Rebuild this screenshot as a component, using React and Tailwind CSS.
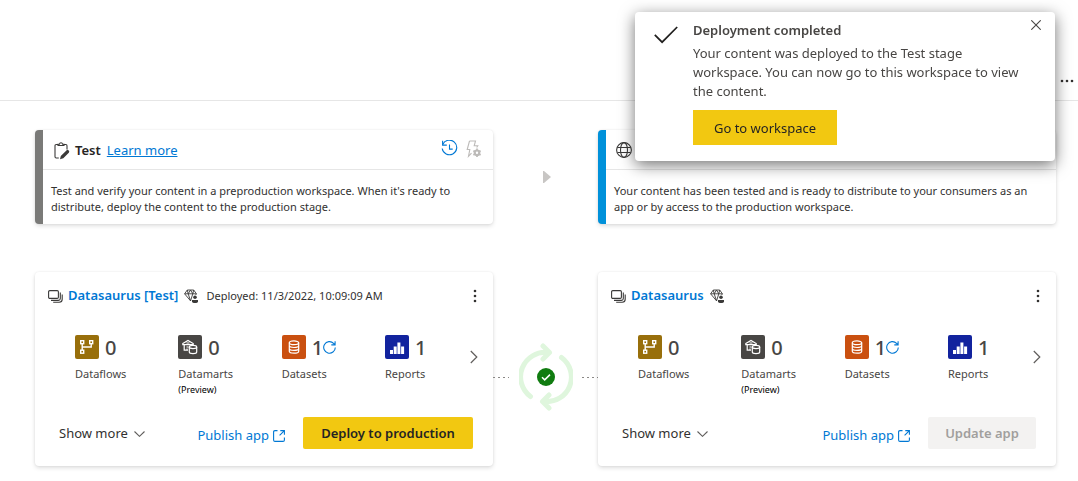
import React from "react";

const stroke = { fill: "none", stroke: "currentColor" };

function ClipboardEditIcon() {
  return (
    <svg width="16" height="18" viewBox="0 0 16 18" className="text-[#3b3a39]" aria-hidden="true">
      <path {...stroke} strokeWidth="1.1" d="M4 2.5H2.2Q1 2.5 1 3.7V14.8Q1 16 2.2 16H4.8M10 2.5h1.8Q13 2.5 13 3.7V7.5" />
      <path {...stroke} strokeWidth="1.1" d="M4 3.5V2.2h1.4Q5.700.8 7 .8T8.600 2.2H10v1.300Z" />
      <path fill="currentColor" d="M12.400 8.500a1.600 1.600 0 0 1 2.400 2.200L9.300 16.300l-3.300 1 .8-3.200Z" />
    </svg>
  );
}

function GlobeIcon() {
  return (
    <svg width="16" height="16" viewBox="0 0 16 16" className="text-[#3b3a39]" aria-hidden="true">
      <g {...stroke} strokeWidth="1.1">
        <circle cx="8" cy="8" r="7.400" />
        <ellipse cx="8" cy="8" rx="3.500" ry="7.400" />
        <path d="M1.400 5.500h13.200M1.400 10.500h13.200" />
      </g>
    </svg>
  );
}

function HistoryIcon() {
  return (
    <svg width="17" height="17" viewBox="0 0 17 17" aria-hidden="true">
      <g {...stroke} strokeWidth="1.100">
        <path d="M1.700 4.600A7.300 7.300 0 1 1 1.200 8.500" />
        <path d="M1.600.8v4.300h4.200M8.500 4.500v4.600h3.200" />
      </g>
    </svg>
  );
}

function RuleSettingsIcon() {
  return (
    <svg width="16" height="18" viewBox="0 0 16 18" aria-hidden="true">
      <path {...stroke} strokeWidth="1.100" d="M3.500 1h6L8.200 5.800h3.600L10.700 7.500M3.500 1 1.200 9.500h2.600L2.500 16.300l3-3.200" />
      <circle {...stroke} cx="11" cy="12.800" r="2.300" strokeWidth="2.200" />
      <path {...stroke} strokeWidth="1.700" d="M11 8.600v2M11 15v2M7.400 10.700l1.700 1M12.900 13.900l1.700 1M7.400 14.900l1.700-1M12.900 11.700l1.700-1" />
    </svg>
  );
}

function WorkspaceIcon() {
  return (
    <svg width="15" height="13" viewBox="0 0 15 13" className="shrink-0 text-[#3b3a39]" aria-hidden="true">
      <g {...stroke} strokeWidth="1.100">
        <rect x=".6" y=".6" width="9.800" height="7.800" rx="1.200" />
        <path d="M3 10.400h7.400q1.900 0 1.900-1.900V2.500M5.200 12.300h6q3 0 3-3V4.500" />
      </g>
    </svg>
  );
}

function PremiumIcon() {
  return (
    <svg width="14" height="14" viewBox="0 0 14 14" className="shrink-0 text-[#3b3a39]" aria-hidden="true">
      <g {...stroke} strokeWidth=".9" strokeLinejoin="round">
        <path d="M6.500 11.800.6 4.800 3.300 1h6.400l2.700 3.800L11.700 6" />
        <path d="M.6 4.800h11.800M3.300 1l.9 3.800 2.300 7M9.700 1l-.9 3.800L6.500 12M4.200 4.800 6.500 1l2.300 3.800" />
      </g>
      <circle cx="11" cy="8.300" r="1.800" fill="currentColor" />
      <path fill="currentColor" d="M8 11h6v1.200q0 1.800-1.800 1.800H9.800Q8 14 8 12.200Z" />
    </svg>
  );
}

function DataflowIcon() {
  return (
    <svg width="16" height="16" viewBox="0 0 16 16" aria-hidden="true">
      <g {...stroke} strokeWidth="1.400">
        <rect x="1.700" y="1.700" width="3" height="3" />
        <rect x="10.700" y="1.700" width="3" height="3" />
        <rect x="1.700" y="11.200" width="3" height="3" />
        <path d="M3.200 4.700v6.500M3.200 8h9V4.700" />
      </g>
    </svg>
  );
}

function DatamartIcon() {
  return (
    <svg width="16" height="16" viewBox="0 0 16 16" aria-hidden="true">
      <g {...stroke} strokeWidth="1.200">
        <path d="M.8 4.500 6 1.400l5.200 3.100v1.200H.8ZM2.200 5.700v5.500H6M4.500 8h2M4.500 10h1M4.500 4h3" />
        <ellipse cx="11" cy="8" rx="3.700" ry="1.600" fill="#484644" />
        <path d="M7.300 8v5q0 1.600 3.700 1.600t3.700-1.600V8" />
      </g>
    </svg>
  );
}

function DatasetIcon() {
  return (
    <svg width="16" height="16" viewBox="0 0 16 16" aria-hidden="true">
      <g {...stroke} strokeWidth="1.200">
        <ellipse cx="8" cy="3.800" rx="4.700" ry="1.900" />
        <path d="M3.300 3.800v8.500q0 1.900 4.700 1.900t4.700-1.900V3.800M3.300 6.600q0 1.900 4.700 1.900t4.700-1.900M3.300 9.400q0 1.900 4.700 1.900t4.700-1.900" />
      </g>
    </svg>
  );
}

function ReportIcon() {
  return (
    <svg width="16" height="16" viewBox="0 0 16 16" aria-hidden="true">
      <path fill="currentColor" d="M1 11h3v4H1zM4.700 7.500h3V15h-3zM8.400 3.500h3V15h-3zM12.100 7.500h3V15h-3z" />
    </svg>
  );
}

function RefreshIcon() {
  return (
    <svg width="13" height="13" viewBox="0 0 13 13" aria-hidden="true">
      <path {...stroke} strokeWidth="1.100" d="M12.300 6.500A5.800 5.800 0 1 1 10.600 2.300L12 3.700M12.100.3v3.600H8.300" />
    </svg>
  );
}

function OpenIcon() {
  return (
    <svg width="12" height="12" viewBox="0 0 12 12" aria-hidden="true">
      <path {...stroke} strokeWidth="1.100" d="M4.500.6H2Q.6.600.6 2v8q0 1.400 1.400 1.400h8q1.400 0 1.400-1.400V7.500M7.300.6h4.100v4.100M11.400.6 6.600 5.400" />
    </svg>
  );
}

function ChevronIcon({ down }) {
  return down ? (
    <svg width="11" height="6" viewBox="0 0 11 6" className="text-[#605e5c]" aria-hidden="true">
      <path {...stroke} strokeWidth="1.100" d="m.5.500 5 4.800 5-4.800" />
    </svg>
  ) : (
    <svg width="8" height="14" viewBox="0 0 8 14" className="text-[#605e5c]" aria-hidden="true">
      <path {...stroke} strokeWidth="1.200" d="m.8 1 6 6-6 6" />
    </svg>
  );
}

function SyncStatusIcon() {
  return (
    <svg width="54" height="68" viewBox="0 0 54 68" role="img" aria-label="Stages in sync">
      <g fill="none" stroke="#dff6dd" strokeWidth="5" strokeLinecap="round" strokeLinejoin="round">
        <path d="M11.500 53.500A24.500 24.500 0 0 1 29 9.500M24 3l6.500 6.500-6.500 6.500" />
        <path d="M42.500 14.500A24.500 24.500 0 0 1 25 58.500M30 52l-6.500 6.500 6.500 6.500" />
      </g>
      <circle cx="27" cy="34" r="9" fill="#107c10" />
      <path d="m23 34.300 2.700 2.600 5.300-5.300" fill="none" stroke="#fff" strokeWidth="1.500" />
    </svg>
  );
}

const cardShadow = "rounded bg-white shadow-[0_2px_4px_rgba(0,0,0,0.13),0_0_2px_rgba(0,0,0,0.08)]";

function StageCard({ accent, header, children }) {
  return (
    <section className={`overflow-hidden border-l-8 ${accent} ${cardShadow}`}>
      <div className="flex h-10 items-center border-b border-[#e6e6e6]">{header}</div>
      <p className="pt-[13px] pr-4 pb-[9px] pl-2 text-[11px] leading-4 text-[#323130]">{children}</p>
    </section>
  );
}

function Metric({ color, icon, count, label, note, refresh }) {
  return (
    <div>
      <div className="flex h-6 items-center">
        <span className={`flex size-6 items-center justify-center rounded-xs text-white ${color}`}>{icon}</span>
        <span className="mt-0.5 ml-1.5 text-[20px] leading-6 font-medium text-[#484644]">{count}</span>
        {refresh && (
          <button type="button" aria-label="Refresh datasets" className="text-[#0078d4]">
            <RefreshIcon />
          </button>
        )}
      </div>
      <div className="mt-1.5 text-[11px] leading-[18px] text-[#484644]">{label}</div>
      {note && <div className="text-[9px] leading-[14px] text-black">{note}</div>}
    </div>
  );
}

function WorkspaceCard({ name, deployed, action }) {
  return (
    <section className={`pb-[17px] ${cardShadow}`}>
      <div className="flex h-12 items-center pr-4 pl-[13px]">
        <WorkspaceIcon />
        <a href="#workspace" className="ml-[5px] text-[13px] font-semibold text-[#0078d4]">{name}</a>
        <span className="ml-1.5"><PremiumIcon /></span>
        {deployed && <span className="ml-2 text-[11px] text-[#323130]">{deployed}</span>}
        <button type="button" aria-label={`More options for ${name}`} className="ml-auto text-[#323130]">
          <svg width="4" height="14" viewBox="0 0 4 14" fill="currentColor" aria-hidden="true">
            <circle cx="2" cy="2" r="1.300" /><circle cx="2" cy="7" r="1.300" /><circle cx="2" cy="12" r="1.300" />
          </svg>
        </button>
      </div>
      <div className="mt-[15px] grid grid-cols-[1fr_1fr_1fr_81px_16px] pr-[11px] pl-10">
        <Metric color="bg-[#986f0b]" icon={<DataflowIcon />} count="0" label="Dataflows" />
        <Metric color="bg-[#484644]" icon={<DatamartIcon />} count="0" label="Datamarts" note="(Preview)" />
        <Metric color="bg-[#ca5010]" icon={<DatasetIcon />} count="1" label="Datasets" refresh />
        <Metric color="bg-[#12239e]" icon={<ReportIcon />} count="1" label="Reports" />
        <button type="button" aria-label="Next items" className="mt-3.5 flex h-4 items-center justify-center">
          <ChevronIcon />
        </button>
      </div>
      <div className="mt-5 flex items-center pr-5 pl-6 text-[13px]">
        <button type="button" className="mt-0.5 flex items-center gap-1.5 text-[#323130]">
          Show more <ChevronIcon down />
        </button>
        <a href="#publish" className="mt-1.5 ml-auto flex items-center gap-1 text-[#0078d4]">
          Publish app <OpenIcon />
        </a>
        {action}
      </div>
    </section>
  );
}

function DottedLink() {
  return (
    <svg width="16" height="1" viewBox="0 0 16 1" aria-hidden="true">
      <path d="M0 .5h16" stroke="#8a8886" strokeDasharray="2 3" />
    </svg>
  );
}

function Connector() {
  return (
    <div className="flex items-center justify-between pt-4">
      <DottedLink />
      <SyncStatusIcon />
      <DottedLink />
    </div>
  );
}

function Toast() {
  return (
    <div role="status" className="fixed top-3 right-[23px] flex w-[420px] rounded bg-white pt-2 pb-4 pl-[19px] text-[13px] shadow-[0_4px_16px_rgba(0,0,0,0.55)]">
      <svg width="24" height="18" viewBox="0 0 24 18" className="mt-1.5 shrink-0 text-[#201f1e]" aria-hidden="true">
        <path {...stroke} strokeWidth="1.700" d="m.8 8.800 7.300 7.400L23.200 1" />
      </svg>
      <div className="ml-[15px] flex-1 pr-[26px] text-[#484644]">
        <h2 className="leading-5 font-semibold">Deployment completed</h2>
        <p className="mt-1 leading-[19px]">
          Your content was deployed to the Test stage workspace. You can now go to this workspace to view the content.
        </p>
        <button type="button" className="mt-[9px] h-[35px] w-36 bg-[#f2c811] pt-0.5 text-[#252423]">Go to workspace</button>
      </div>
      <button type="button" aria-label="Close" className="absolute top-2 right-3.5 text-[#484644]">
        <svg width="10" height="10" viewBox="0 0 10 10" aria-hidden="true">
          <path {...stroke} strokeWidth="1.100" d="m.3.300 9.400 9.400M9.700.3.300 9.700" />
        </svg>
      </button>
    </div>
  );
}

export default function App() {
  return (
    <div className="bg-white font-['Noto_Sans','Open_Sans',sans-serif]">
      <header className="flex h-[101px] items-end justify-end border-b border-[#e6e6e6] pr-1 pb-[17px]">
        <button type="button" aria-label="More options" className="text-[#323130]">
          <svg width="14" height="4" viewBox="0 0 14 4" fill="currentColor" aria-hidden="true">
            <circle cx="2" cy="2" r="1.300" /><circle cx="7" cy="2" r="1.300" /><circle cx="12" cy="2" r="1.300" />
          </svg>
        </button>
      </header>
      <main className="grid grid-cols-[1fr_105px_1fr] gap-y-12 pt-[29px] pr-[22px] pb-3 pl-[35px]">
        <StageCard
          accent="border-[#7a7a78]"
          header={
            <div className="flex w-full items-center px-[11px] pt-0.5 text-[13px]">
              <ClipboardEditIcon />
              <h2 className="ml-[5px] font-semibold text-[#252423]">Test</h2>
              <a href="#learn" className="ml-1.5 text-[#0078d4] underline">Learn more</a>
              <span className="-mt-1 ml-auto flex items-center gap-2">
                <button type="button" aria-label="Deployment history" className="text-[#0078d4]"><HistoryIcon /></button>
                <button type="button" aria-label="Deployment rules" className="text-[#bdbbb9]"><RuleSettingsIcon /></button>
              </span>
            </div>
          }
        >
          Test and verify your content in a preproduction workspace. When it's ready to distribute, deploy the content to the production stage.
        </StageCard>
        <div className="flex items-center justify-center pl-0.5">
          <svg width="8" height="12" viewBox="0 0 8 12" aria-hidden="true"><path fill="#c8c6c4" d="M0 0h1l7 6-7 6H0Z" /></svg>
        </div>
        <StageCard accent="border-[#0091da]" header={<div className="pl-[10px]"><GlobeIcon /></div>}>
          Your content has been tested and is ready to distribute to your consumers as an app or by access to the production workspace.
        </StageCard>
        <WorkspaceCard
          name="Datasaurus [Test]"
          deployed="Deployed: 11/3/2022, 10:09:09 AM"
          action={
            <button type="button" className="ml-[18px] h-8 w-[170px] rounded-xs bg-[#f2c811] pt-0.5 font-semibold text-[#252423]">
              Deploy to production
            </button>
          }
        />
        <Connector />
        <WorkspaceCard
          name="Datasaurus"
          action={
            <button type="button" disabled className="ml-[18px] h-8 w-[108px] rounded-xs bg-[#f3f2f1] pt-0.5 font-semibold text-[#a19f9d]">
              Update app
            </button>
          }
        />
      </main>
      <Toast />
    </div>
  );
}
